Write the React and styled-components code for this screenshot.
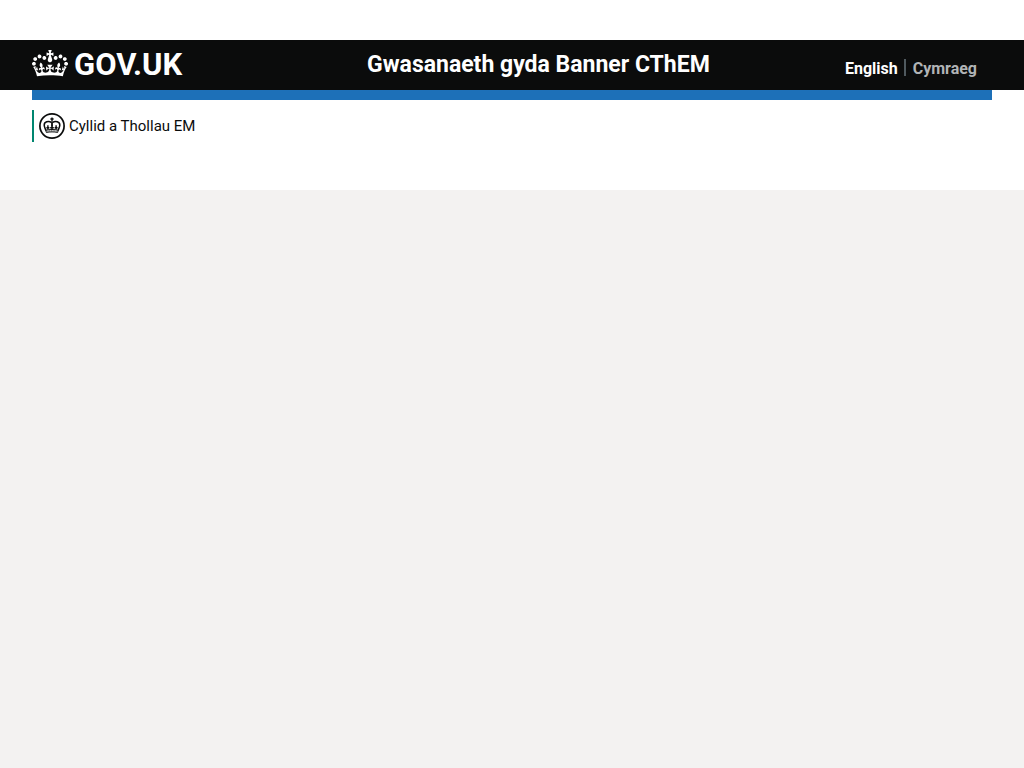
import React from "react";
import styled, { createGlobalStyle } from "styled-components";

const GlobalStyle = createGlobalStyle`
  *, *::before, *::after { box-sizing: border-box; }
  html { background: #f3f2f1; }
  body {
    margin: 0;
    color: #0b0c0c;
    font-family: Roboto, "Liberation Sans", sans-serif;
    font-size: 16px;
    line-height: 20px;
  }
`;

const Page = styled.div`
  background: #ffffff;
  padding: 40px 0 48px;
`;

const Header = styled.header`
  background: #0b0c0c;
  color: #ffffff;
`;

const Container = styled.div`
  max-width: 960px;
  margin: 0 32px;

  @media (min-width: 1024px) {
    margin: 0 auto;
  }
`;

const HeaderRow = styled(Container)`
  display: grid;
  grid-template-columns: 1fr 2fr;
  min-height: 50px;
  align-items: center;
`;

const HomeLink = styled.a`
  display: flex;
  align-items: center;
  gap: 6px;
  color: inherit;
  text-decoration: none;
`;

const Crown = styled.svg`
  width: 36px;
  height: 30px;
  fill: currentColor;
`;

const Logotype = styled.span`
  font-size: 31px;
  line-height: 32px;
  font-weight: 700;
`;

const Content = styled.div`
  display: flex;
  align-items: center;
  justify-content: space-between;
  padding: 0 15px;
`;

const ServiceLink = styled.a`
  color: inherit;
  font-size: 23px;
  line-height: 30px;
  font-weight: 700;
  text-decoration: none;
`;

const LanguageList = styled.ul`
  display: flex;
  margin: 0;
  padding: 8px 0 0;
  list-style: none;
  font-weight: 700;
`;

const LanguageItem = styled.li`
  & + & {
    margin-left: 6px;
    padding-left: 9px;
    background: linear-gradient(#505a5f, #505a5f) left top / 2px 17px no-repeat;
  }
`;

const OtherLanguage = styled.a`
  color: #b1b4b6;
  text-decoration: none;
`;

const BlueBar = styled.div`
  height: 10px;
  background: #1d70b8;
`;

const Organisation = styled.div`
  display: flex;
  align-items: center;
  gap: 4px;
  height: 32px;
  margin-top: 10px;
  padding-left: 5px;
  border-left: 2px solid #008670;
  font-size: 15px;
  line-height: 22px;
`;

const Crest = styled.svg`
  width: 26px;
  height: 26px;
`;

function GovCrown() {
  return (
    <Crown viewBox="0 0 132 97" preserveAspectRatio="xMidYMin meet" aria-hidden="true">
      <path d="M25 30.2c3.5 1.5 7.7-.2 9.1-3.7 1.5-3.6-.2-7.8-3.9-9.2-3.6-1.4-7.6.3-9.1 3.9-1.4 3.5.3 7.5 3.9 9zM9 39.5c3.6 1.5 7.8-.2 9.2-3.7 1.5-3.6-.2-7.8-3.9-9.1-3.6-1.5-7.6.2-9.1 3.8-1.4 3.5.3 7.5 3.8 9zM4.4 57.2c3.5 1.5 7.7-.2 9.1-3.8 1.5-3.6-.2-7.7-3.9-9.1-3.5-1.5-7.6.3-9.1 3.8-1.4 3.5.3 7.6 3.9 9.1zm38.3-21.4c3.5 1.5 7.7-.2 9.1-3.8 1.5-3.6-.2-7.7-3.9-9.1-3.6-1.5-7.6.3-9.1 3.8-1.3 3.6.4 7.7 3.9 9.1zm64.4-5.6c-3.6 1.5-7.8-.2-9.1-3.7-1.5-3.6.2-7.8 3.8-9.2 3.6-1.4 7.7.3 9.2 3.9 1.3 3.5-.4 7.5-3.9 9zm15.9 9.3c-3.6 1.5-7.7-.2-9.1-3.7-1.5-3.6.2-7.8 3.7-9.1 3.6-1.5 7.7.2 9.2 3.8 1.5 3.5-.3 7.5-3.8 9zm4.7 17.7c-3.6 1.5-7.8-.2-9.2-3.8-1.5-3.6.2-7.7 3.9-9.1 3.6-1.5 7.7.3 9.2 3.8 1.3 3.5-.4 7.6-3.9 9.1zM89.3 35.8c-3.6 1.5-7.8-.2-9.2-3.8-1.4-3.6.2-7.7 3.9-9.1 3.6-1.5 7.7.3 9.2 3.8 1.4 3.6-.3 7.7-3.9 9.1zM69.7 17.7l8.9 4.7V9.3l-8.9 2.8c-.2-.3-.5-.6-.9-.9L72.4 0H59.6l3.5 11.2c-.3.3-.6.5-.9.9l-8.8-2.8v13.1l8.8-4.7c.3.3.6.7.9.9l-5 15.4v.1c-.2.8-.4 1.6-.4 2.4 0 4.1 3.1 7.5 7 8.1h.2c.3 0 .7.1 1 .1.4 0 .7 0 1-.1h.2c4-.6 7.1-4.1 7.1-8.1 0-.8-.1-1.7-.4-2.4V34l-5.1-15.4c.4-.2.7-.6 1-.9zM66 92.8c16.9 0 32.8 1.1 47.1 3.2 4-16.9 8.9-26.7 14-33.5l-9.6-3.4c1 4.9 1.1 7.2 0 10.2-1.5-1.4-3-4.3-4.2-8.7L108.6 76c2.8-2 5-3.2 7.5-3.3-4.4 9.4-10 11.9-13.6 11.2-4.3-.8-6.3-4.6-5.6-7.9 1-4.7 5.7-5.9 8-.5 4.3-8.7-3-11.4-7.6-8.8 7.1-7.2 7.9-13.5 2.1-21.1-8 6.1-8.1 12.3-4.5 20.8-4.7-5.4-12.1-2.5-9.5 6.2 3.4-5.2 7.9-2 7.2 3.1-.6 4.3-6.4 7.8-13.5 7.2-10.3-.9-10.9-8-11.2-13.8 2.5-.5 7.1 1.8 11 7.3L80.2 60c-4.1 4.4-8 5.3-12.3 5.4 1.4-4.4 8-11.6 8-11.6H55.5s6.4 7.2 7.9 11.6c-4.2-.1-8-1-12.3-5.4l1.4 16.4c3.9-5.5 8.5-7.7 10.9-7.3-.3 5.8-.9 12.8-11.1 13.8-7.2.6-12.9-2.9-13.5-7.2-.7-5 3.8-8.3 7.1-3.1 2.7-8.7-4.6-11.6-9.4-6.2 3.7-8.5 3.6-14.7-4.6-20.8-5.8 7.6-5 13.9 2.2 21.1-4.7-2.6-11.9.1-7.7 8.8 2.3-5.5 7.1-4.2 8.1.5.7 3.3-1.3 7.1-5.7 7.9-3.5.7-9-1.8-13.5-11.2 2.5.1 4.7 1.3 7.5 3.3l-4.7-15.4c-1.2 4.4-2.7 7.2-4.3 8.7-1.1-3-.9-5.3 0-10.2l-9.5 3.4c5 6.9 9.9 16.7 14 33.5 14.8-2.1 30.8-3.2 47.7-3.2z" />
    </Crown>
  );
}

function HmrcCrest() {
  return (
    <Crest viewBox="0 0 26 26" fill="none" stroke="#0b0c0c" aria-hidden="true">
      <circle cx="13" cy="13" r="12.1" strokeWidth="1.7" />
      <path d="M13 4.4v3.8M11.4 6h3.2" strokeWidth="1.4" />
      <path d="M12.4 9.4C9.6 7.4 5 8.6 5.2 12.2c.1 2 1.2 3.6 1.7 5.4M13.6 9.4c2.8-2 7.4-.8 7.2 2.8-.1 2-1.2 3.6-1.7 5.4" strokeWidth="1.5" />
      <path d="M13 8.4v5" strokeWidth="1.8" />
      <path d="M13 12.6v4.2M11.2 14.7h3.6M8.9 12.2v4.4M7.4 14.7h3M17.1 12.2v4.4M15.6 14.7h3" strokeWidth="1.4" />
      <path d="M6.8 17.2c4-.9 8.4-.9 12.4 0l-.5 2.2c-3.7-.7-7.7-.7-11.4 0z" strokeWidth="1" />
      <path d="M8.5 18.2c3-.5 6-.5 9 0" strokeWidth="0.8" strokeDasharray="1 0.7" />
    </Crest>
  );
}

export default function App() {
  return (
    <>
      <GlobalStyle />
      <Page>
        <Header>
          <HeaderRow>
            <HomeLink href="#">
              <GovCrown />
              <Logotype>GOV.UK</Logotype>
            </HomeLink>
            <Content>
              <ServiceLink href="#">Gwasanaeth gyda Banner CThEM</ServiceLink>
              <nav aria-label="Language">
                <LanguageList>
                  <LanguageItem aria-current="true">English</LanguageItem>
                  <LanguageItem>
                    <OtherLanguage href="#" lang="cy">Cymraeg</OtherLanguage>
                  </LanguageItem>
                </LanguageList>
              </nav>
            </Content>
          </HeaderRow>
        </Header>
        <Container>
          <BlueBar />
          <Organisation>
            <HmrcCrest />
            <span>Cyllid a Thollau EM</span>
          </Organisation>
        </Container>
      </Page>
    </>
  );
}
